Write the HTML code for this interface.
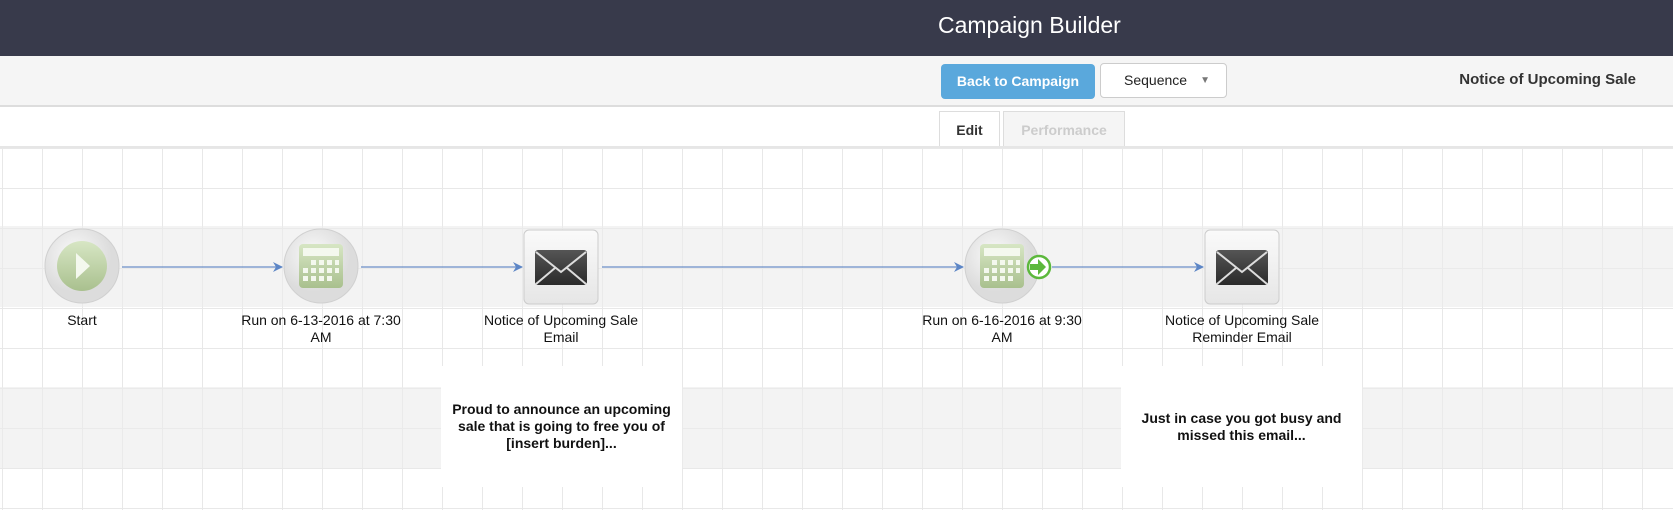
<!DOCTYPE html>
<html><head><style>
*{margin:0;padding:0;box-sizing:border-box}
body{width:1673px;height:510px;overflow:hidden;font-family:"Liberation Sans",Arial,sans-serif;background:#fff;position:relative}
.hdr{position:absolute;left:0;top:0;width:1673px;height:56px;background:#383a4b;color:#fff;font-size:23px;text-align:center;line-height:46px}
.hdr span{position:absolute;left:938px;top:2px}
.tb{position:absolute;left:0;top:56px;width:1673px;height:51px;background:#f5f5f5;border-bottom:2px solid #ddd}
.btn{position:absolute;top:64px;left:941px;width:154px;height:35px;background:#5aa8dc;border-radius:4px;color:#fff;font-weight:bold;font-size:14px;text-align:center;line-height:35px}
.seq{position:absolute;top:63px;left:1100px;width:127px;height:35px;background:#fff;border:1px solid #ccc;border-radius:4px;font-size:14px;line-height:33px;padding-left:23px;color:#222}
.seq i{position:absolute;right:16px;top:0;font-style:normal;font-size:10px;color:#777}
.ttl{position:absolute;top:71px;right:37px;font-weight:bold;font-size:15px;color:#333}
.tab{position:absolute;top:111px;height:36px;border:1px solid #ddd;border-bottom:none;font-weight:bold;font-size:14px;text-align:center;line-height:36px}
.grid{position:absolute;left:0;top:146px;width:1673px;height:364px;border-top:2px solid #e6e6e6;
background-image:linear-gradient(to right,#e8e8e8 1px,transparent 1px),linear-gradient(to bottom,#e8e8e8 1px,transparent 1px);
background-size:40px 40px;background-position:2px 0,0 0}
.band{position:absolute;left:0;width:1673px;height:81px;background:rgba(235,235,235,.6)}
.lbl{position:absolute;text-align:center;font-size:14px;line-height:17px;color:#111}
.note{position:absolute;top:366px;width:241px;height:121px;background:#fff;font-weight:bold;font-size:14px;line-height:17px;text-align:center;display:flex;align-items:center;justify-content:center;padding:0 4px;color:#111}
</style></head><body>
<div class="hdr"><span>Campaign Builder</span></div>
<div class="tb"></div>
<div class="btn">Back to Campaign</div>
<div class="seq">Sequence<i>▼</i></div>
<div class="ttl">Notice of Upcoming Sale</div>
<div class="tab" style="left:939px;width:61px;background:#fff;color:#333">Edit</div>
<div class="tab" style="left:1003px;width:122px;background:#f5f5f5;color:#ccc;font-weight:bold">Performance</div>
<div class="grid"></div>
<div class="band" style="top:226px"></div>
<div class="band" style="top:387px"></div>
<div class="note" style="left:441px">Proud to announce an upcoming sale that is going to free you of [insert burden]...</div>
<div class="note" style="left:1121px">Just in case you got busy and missed this email...</div>
<svg width="1673" height="510" style="position:absolute;left:0;top:0">
<defs>
<radialGradient id="cg" cx="40%" cy="35%"><stop offset="0" stop-color="#fafafa"/><stop offset="1" stop-color="#dcdcdc"/></radialGradient>
<linearGradient id="gg" x1="0" y1="0" x2="0" y2="1"><stop offset="0" stop-color="#d7e6c4"/><stop offset="1" stop-color="#a9c08e"/></linearGradient>
<linearGradient id="eg" x1="0" y1="0" x2="0" y2="1"><stop offset="0" stop-color="#fafafa"/><stop offset="1" stop-color="#e6e6e6"/></linearGradient>
<linearGradient id="mg" x1="0" y1="0" x2="0" y2="1"><stop offset="0" stop-color="#555"/><stop offset="1" stop-color="#2a2a2a"/></linearGradient>
<g id="calc"><rect x="-22" y="-22" width="44" height="44" rx="4" fill="url(#gg)"/><rect x="-18" y="-18" width="36" height="8" fill="#f4f8ee"/>
<g fill="#f4f8ee"><rect x="-10" y="-6" width="5" height="5"/><rect x="-2" y="-6" width="5" height="5"/><rect x="6" y="-6" width="5" height="5"/><rect x="14" y="-6" width="4" height="5"/>
<rect x="-18" y="2" width="5" height="5"/><rect x="-10" y="2" width="5" height="5"/><rect x="-2" y="2" width="5" height="5"/><rect x="6" y="2" width="5" height="5"/><rect x="14" y="2" width="4" height="5"/>
<rect x="-18" y="10" width="5" height="5"/><rect x="-10" y="10" width="5" height="5"/><rect x="-2" y="10" width="5" height="5"/><rect x="6" y="10" width="5" height="5"/></g></g>
<g id="mail"><rect x="-37" y="-37" width="74" height="74" rx="5" fill="url(#eg)" stroke="#ccc"/><rect x="-26" y="-17" width="52" height="35" rx="3" fill="url(#mg)"/><path d="M-25 -15 L0 5 L25 -15 M-25 17 L-6 1 M25 17 L6 1" stroke="#ddd" stroke-width="2" fill="none"/></g>
<marker id="ar" markerWidth="10" markerHeight="10" refX="9" refY="5" orient="auto" markerUnits="userSpaceOnUse"><path d="M0 0 L10 5 L0 10 L3 5z" fill="#5d86c6"/></marker>
</defs>
<g stroke="#6b8fc8" stroke-width="1.3" marker-end="url(#ar)"><line x1="122" y1="267" x2="282" y2="267"/><line x1="361" y1="267" x2="522" y2="267"/><line x1="602" y1="267" x2="963" y2="267"/><line x1="1052" y1="267" x2="1203" y2="267"/></g>
<circle cx="82" cy="266" r="37" fill="url(#cg)" stroke="#d0d0d0"/><circle cx="82" cy="266" r="25" fill="url(#gg)"/><path d="M76 253 L90 266 L76 279z" fill="#f4f8ee"/>
<circle cx="321" cy="266" r="37" fill="url(#cg)" stroke="#d0d0d0"/><use href="#calc" x="321" y="266"/>
<use href="#mail" x="561" y="267"/>
<circle cx="1002" cy="266" r="37" fill="url(#cg)" stroke="#d0d0d0"/><use href="#calc" x="1002" y="266"/>
<circle cx="1039" cy="267" r="11" fill="#fff" stroke="#5cb83c" stroke-width="2.5"/><path d="M1030 264 h8 v-5 l8 8 l-8 8 v-5 h-8z" fill="#5cb83c"/>
<use href="#mail" x="1242" y="267"/>
</svg>
<div class="lbl" style="left:22px;width:120px;top:312px">Start</div>
<div class="lbl" style="left:231px;width:180px;top:312px">Run on 6-13-2016 at 7:30 AM</div>
<div class="lbl" style="left:474px;width:174px;top:312px">Notice of Upcoming Sale Email</div>
<div class="lbl" style="left:912px;width:180px;top:312px">Run on 6-16-2016 at 9:30 AM</div>
<div class="lbl" style="left:1155px;width:174px;top:312px">Notice of Upcoming Sale Reminder Email</div>
</body></html>
